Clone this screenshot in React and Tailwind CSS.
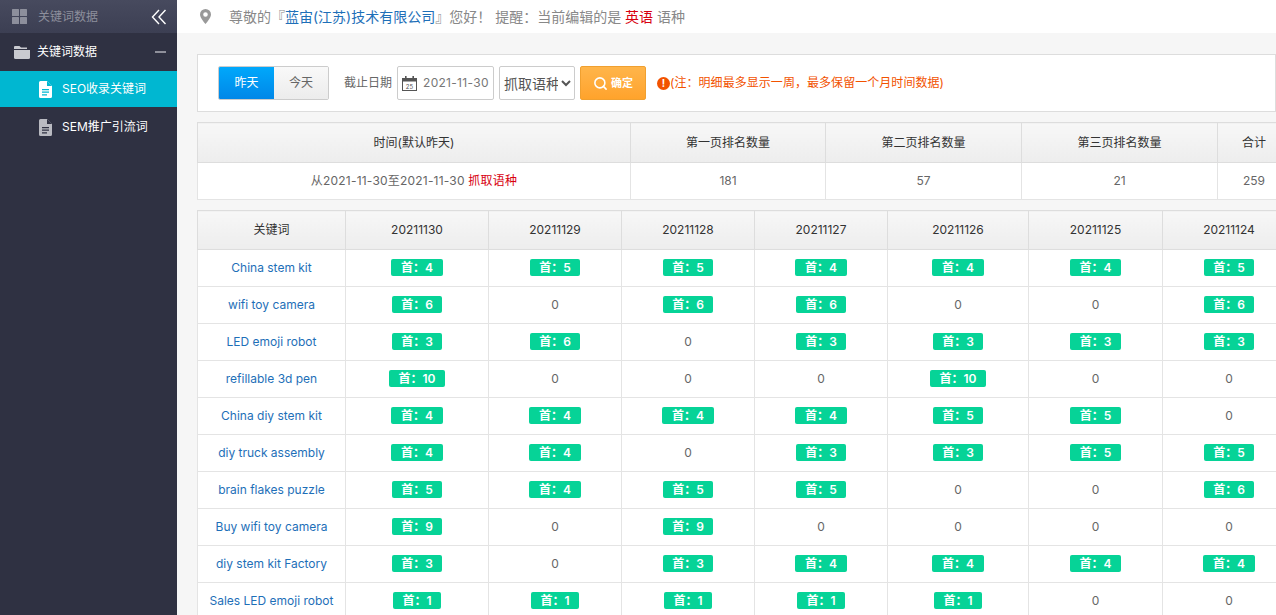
import React from 'react';
import { Search } from 'lucide-react';

const font = 'font-["Inter","Noto_Sans_CJK_SC",sans-serif]';

const dates = ['20211130', '20211129', '20211128', '20211127', '20211126', '20211125', '20211124'];

const rows = [
  ['China stem kit', 4, 5, 5, 4, 4, 4, 5],
  ['wifi toy camera', 6, 0, 6, 6, 0, 0, 6],
  ['LED emoji robot', 3, 6, 0, 3, 3, 3, 3],
  ['refillable 3d pen', 10, 0, 0, 0, 10, 0, 0],
  ['China diy stem kit', 4, 4, 4, 4, 5, 5, 0],
  ['diy truck assembly', 4, 4, 0, 3, 3, 5, 5],
  ['brain flakes puzzle', 5, 4, 5, 5, 0, 0, 6],
  ['Buy wifi toy camera', 9, 0, 9, 0, 0, 0, 0],
  ['diy stem kit Factory', 3, 0, 3, 4, 4, 4, 4],
  ['Sales LED emoji robot', 1, 1, 1, 1, 1, 0, 0],
];

const DocIcon = ({ bg, fg }) => (
  <svg width="13" height="17" viewBox="0 0 13 17">
    <path d="M1.5 0H8l5 5v10.5a1.5 1.5 0 0 1-1.5 1.5h-10A1.5 1.5 0 0 1 0 15.5v-14A1.5 1.5 0 0 1 1.5 0z" fill={fg} />
    <path d="M8 0v5h5" fill={bg} />
    <path d="M3 8h7v1.2H3zM3 10.6h7v1.2H3zM3 13.2h5v1.2H3z" fill={bg} />
  </svg>
);

const Sidebar = () => (
  <aside className="w-[177px] shrink-0 bg-[#2f3142] text-[12px]">
    <div className="flex h-[33px] items-center justify-between bg-gradient-to-b from-[#474a5e] to-[#3c3f53] pl-[12px] pr-[10px]">
      <div className="flex items-center gap-[11px] text-[#8d8f9c]">
        <svg width="15" height="15" viewBox="0 0 15 15" fill="#8d8f9c">
          <rect width="7" height="7" rx="0.5" />
          <rect x="8" width="7" height="7" rx="0.5" />
          <rect y="8" width="7" height="7" rx="0.5" />
          <rect x="8" y="8" width="7" height="7" rx="0.5" />
        </svg>
        <span>关键词数据</span>
      </div>
      <svg width="16" height="16" viewBox="0 0 16 16" fill="none" stroke="#ffffff" strokeWidth="1.4">
        <path d="M8 1L1.5 8L8 15M14.5 1L8 8L14.5 15" />
      </svg>
    </div>
    <div className="flex h-[38px] items-center justify-between pl-[14px] pr-[11px] text-white">
      <div className="flex items-center gap-[7px]">
        <svg width="16" height="13" viewBox="0 0 16 13" fill="#c9cad0">
          <path d="M1 0h4.5l1.5 1.5H13V3H0V1a1 1 0 0 1 1-1z" />
          <path d="M0 4h16v7.5a1.5 1.5 0 0 1-1.5 1.5h-13A1.5 1.5 0 0 1 0 11.5z" />
        </svg>
        <span>关键词数据</span>
      </div>
      <span className="h-[2px] w-[11px] bg-[#8f909b]" />
    </div>
    <div className="flex h-[36px] items-center gap-[10px] bg-[#00b7d1] pl-[39px] text-white">
      <DocIcon bg="#00b7d1" fg="#ffffff" />
      <span>SEO收录关键词</span>
    </div>
    <div className="flex h-[38px] items-center gap-[10px] pl-[39px] pt-[2px] text-white">
      <DocIcon bg="#2f3142" fg="#b9bac1" />
      <span>SEM推广引流词</span>
    </div>
  </aside>
);

const Badge = ({ n }) => (
  <span className="inline-block h-[17px] rounded-[2px] bg-[#06d397] px-[9.5px] text-center text-[12px] font-semibold leading-[17px] text-white">
    首：{n}
  </span>
);

const thCls = 'border border-[#dddddd] bg-gradient-to-b from-[#f7f7f7] to-[#ededed] font-normal text-[#333333] text-[12px]';
const tdCls = 'border border-[#e4e4e4] text-center text-[12px] text-[#666666]';

const App = () => (
  <div className={`flex h-[615px] w-[1276px] overflow-hidden bg-[#f6f6f6] ${font}`}>
    <Sidebar />
    <main className="min-w-0 flex-1">
      <div className="flex h-[33px] items-center gap-[18px] bg-white pb-[1px] pl-[23px] text-[14px] text-[#888888]">
        <svg width="11" height="15" viewBox="0 0 11 15" fill="#999999">
          <path fillRule="evenodd" d="M5.5 0A5.5 5.5 0 0 1 11 5.5C11 9 5.5 15 5.5 15S0 9 0 5.5A5.5 5.5 0 0 1 5.5 0zm0 3.2a2.3 2.3 0 1 0 0 4.6 2.3 2.3 0 0 0 0-4.6z" />
        </svg>
        <p>
          尊敬的『<span className="text-[#1e6fb8]">蓝宙(江苏)技术有限公司</span>』您好！ 提醒：当前编辑的是 <span className="text-[#d8000f]">英语</span> 语种
        </p>
      </div>
      <div className="w-[1119px] pl-[20px] pt-[21px]">
        <div className="flex h-[58px] w-[1079px] items-center border border-[#dddddd] bg-white pl-[20px] text-[12px] text-[#666666]">
          <div className="flex h-[34px] overflow-hidden rounded-[2px] border border-[#cccccc]">
            <span className="flex w-[55px] items-center justify-center bg-gradient-to-b from-[#00a8fb] to-[#0087e8] text-white">昨天</span>
            <span className="flex w-[54px] items-center justify-center bg-gradient-to-b from-[#f9f9f9] to-[#ececec]">今天</span>
          </div>
          <span className="ml-[15px]">截止日期</span>
          <div className="ml-[5px] flex h-[34px] w-[97px] items-center gap-[6px] rounded-[2px] border border-[#cccccc] pl-[4px]">
            <svg width="15" height="15" viewBox="0 0 15 15">
              <rect x="0.5" y="2.5" width="14" height="12" fill="#ffffff" stroke="#555555" />
              <rect y="2" width="15" height="3.5" fill="#555555" />
              <rect x="3" width="1.6" height="3.5" fill="#555555" />
              <rect x="10.4" width="1.6" height="3.5" fill="#555555" />
              <text x="7.5" y="12.5" textAnchor="middle" fontSize="6" fill="#555555">25</text>
            </svg>
            <span className="text-[12px] tracking-[0.3px] text-[#777777]">2021-11-30</span>
          </div>
          <select className="ml-[5px] h-[34px] w-[76px] rounded-[2px] border border-[#cccccc] bg-white text-[14px] text-[#555555]">
            <option>抓取语种</option>
          </select>
          <button type="button" className="ml-[5px] flex h-[34px] w-[66px] items-center justify-center gap-[3px] rounded-[2px] border border-[#f0a030] bg-gradient-to-b from-[#ffb54a] to-[#ffa32b] text-[11px] font-bold text-white">
            <Search size={15} strokeWidth={2.5} />
            确定
          </button>
          <span className="ml-[11px] flex h-[13px] w-[13px] items-center justify-center rounded-full bg-[#f25200] text-[10px] font-bold text-white">!</span>
          <span className="tracking-[0.05px] text-[#f25200]">(注：明细最多显示一周，最多保留一个月时间数据)</span>
        </div>

        <table className="mt-[10px] w-[1093px] table-fixed border-collapse bg-white">
          <colgroup>
            <col className="w-[433px]" />
            <col className="w-[195px]" />
            <col className="w-[196px]" />
            <col className="w-[196px]" />
            <col className="w-[73px]" />
          </colgroup>
          <thead>
            <tr className="h-[40px]">
              {['时间(默认昨天)', '第一页排名数量', '第二页排名数量', '第三页排名数量', '合计'].map((t) => (
                <th key={t} className={thCls}>{t}</th>
              ))}
            </tr>
          </thead>
          <tbody>
            <tr className="h-[37px]">
              <td className={`${tdCls} tracking-[0.2px]`}>从2021-11-30至2021-11-30 <span className="text-[#d8000f]">抓取语种</span></td>
              <td className={tdCls}>181</td>
              <td className={tdCls}>57</td>
              <td className={tdCls}>21</td>
              <td className={tdCls}>259</td>
            </tr>
          </tbody>
        </table>

        <table className="mt-[10px] w-[1098px] table-fixed border-collapse bg-white">
          <colgroup>
            <col className="w-[148px]" />
            <col className="w-[143px]" />
            <col className="w-[133px]" />
            <col className="w-[133px]" />
            <col className="w-[133px]" />
            <col className="w-[141px]" />
            <col className="w-[134px]" />
            <col className="w-[133px]" />
          </colgroup>
          <thead>
            <tr className="h-[39px]">
              <th className={thCls}>关键词</th>
              {dates.map((d) => (
                <th key={d} className={thCls}>{d}</th>
              ))}
            </tr>
          </thead>
          <tbody>
            {rows.map(([kw, ...vals]) => (
              <tr key={kw} className="h-[37px]">
                <td className={`${tdCls} !text-[#1e6fb8]`}>{kw}</td>
                {vals.map((v, i) => (
                  <td key={i} className={tdCls}>{v > 0 ? <Badge n={v} /> : 0}</td>
                ))}
              </tr>
            ))}
          </tbody>
        </table>
      </div>
    </main>
  </div>
);

export default App;
